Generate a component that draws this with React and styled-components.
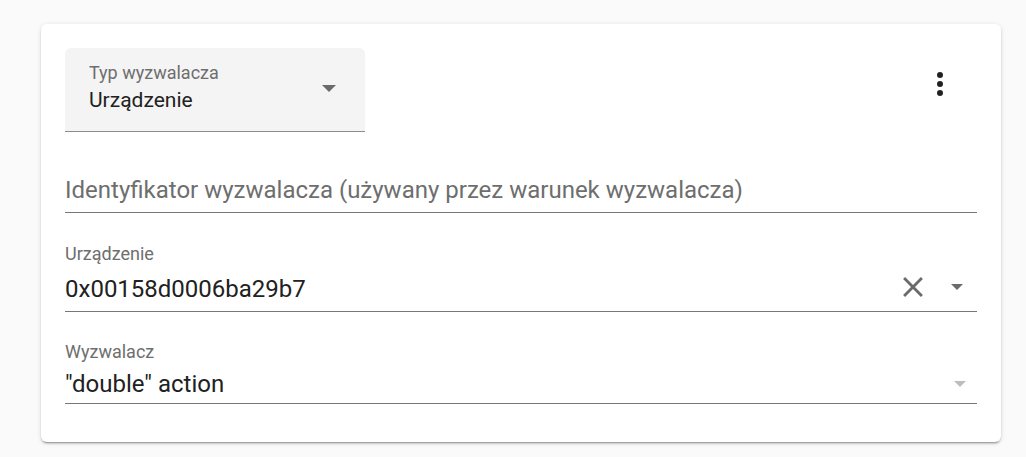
import React from "react";
import styled, { createGlobalStyle } from "styled-components";

const Global = createGlobalStyle`
  html, body { margin: 0; padding: 0; background: #fafafa; }
  body { font-family: Roboto, "Noto Sans", Arial, sans-serif; }
`;

const Page = styled.div`
  padding: 24px 0 0 41px;
  min-height: 457px;
  box-sizing: border-box;
  background: #fafafa;
`;

const Card = styled.div`
  width: 960px;
  background: #fff;
  border-radius: 6px;
  box-shadow: 0 2px 2px 0 rgba(0,0,0,.14), 0 1px 5px 0 rgba(0,0,0,.12), 0 3px 1px -2px rgba(0,0,0,.2);
  padding: 24px 24px 38px 24px;
  box-sizing: border-box;
`;

const Header = styled.div`
  display: flex;
  justify-content: space-between;
  align-items: flex-start;
`;

const Select = styled.div`
  position: relative;
  width: 300px;
  height: 84px;
  box-sizing: border-box;
  background: #f4f4f4;
  border-radius: 6px 6px 0 0;
  border-bottom: 1px solid #8c8c8c;
  padding: 13px 0 0 24px;
  display: flex;
  flex-direction: column;
`;

const SelectLabel = styled.div`
  font-size: 18px;
  line-height: 24px;
  color: #6e6e6e;
`;

const SelectValue = styled.div`
  font-size: 21px;
  line-height: 28px;
  margin-top: 1px;
  color: #212121;
`;

const SelectArrow = styled.span`
  position: absolute;
  right: 29px;
  top: 37px;
  width: 0;
  height: 0;
  border-left: 7.5px solid transparent;
  border-right: 7.5px solid transparent;
  border-top: 7.5px solid #6b6b6b;
`;

const IconButton = styled.button`
  width: 72px;
  height: 72px;
  border: none;
  background: none;
  padding: 0;
  margin: 0 1px 0 0;
  display: flex;
  align-items: center;
  justify-content: center;
  color: ${(p) => p.$color || "#212121"};
`;

const Field = styled.div`
  display: flex;
  align-items: center;
  margin-top: ${(p) => p.$top}px;
  padding-bottom: ${(p) => p.$bottom}px;
  border-bottom: 1px solid #777;
`;

const FieldBody = styled.div`
  flex: 1;
  display: flex;
  flex-direction: column;
`;

const FieldLabel = styled.div`
  font-size: 18px;
  line-height: 24px;
  color: #6e6e6e;
`;

const FieldValue = styled.div`
  font-size: 24px;
  line-height: 32px;
  margin-top: ${(p) => p.$gap || 0}px;
  color: ${(p) => (p.$placeholder ? "#6e6e6e" : "#212121")};
`;

const Trailing = styled.div`
  display: flex;
  align-items: center;
  align-self: flex-end;
  margin-bottom: ${(p) => p.$mb || 0}px;
`;

const Tri = styled.span`
  display: block;
  width: 0;
  height: 0;
  border-left: 6.5px solid transparent;
  border-right: 6.5px solid transparent;
  border-top: 6.5px solid ${(p) => p.$color};
  margin: 0 ${(p) => p.$mr}px 0 ${(p) => p.$ml}px;
`;

const DotsIcon = () => (
  <svg width="36" height="36" viewBox="0 0 24 24" fill="currentColor">
    <path d="M12,16A2,2 0 0,1 14,18A2,2 0 0,1 12,20A2,2 0 0,1 10,18A2,2 0 0,1 12,16M12,10A2,2 0 0,1 14,12A2,2 0 0,1 12,14A2,2 0 0,1 10,12A2,2 0 0,1 12,10M12,4A2,2 0 0,1 14,6A2,2 0 0,1 12,8A2,2 0 0,1 10,6A2,2 0 0,1 12,4Z" />
  </svg>
);

const CloseIcon = () => (
  <svg width="34" height="34" viewBox="0 0 24 24" fill="#6b6b6b" style={{ display: "block" }}>
    <path d="M19,6.41L17.59,5L12,10.59L6.41,5L5,6.41L10.59,12L5,17.59L6.41,19L12,13.41L17.59,19L19,17.59L13.41,12L19,6.41Z" />
  </svg>
);

export default function App() {
  return (
    <>
      <Global />
      <Page>
        <Card>
          <Header>
            <Select>
              <SelectLabel>Typ wyzwalacza</SelectLabel>
              <SelectValue>Urządzenie</SelectValue>
              <SelectArrow />
            </Select>
            <IconButton aria-label="menu">
              <DotsIcon />
            </IconButton>
          </Header>
          <Field $top={42} $bottom={6}>
            <FieldBody>
              <FieldValue $placeholder>
                Identyfikator wyzwalacza (używany przez warunek wyzwalacza)
              </FieldValue>
            </FieldBody>
          </Field>
          <Field $top={29} $bottom={6}>
            <FieldBody>
              <FieldLabel>Urządzenie</FieldLabel>
              <FieldValue $gap={7}>0x00158d0006ba29b7</FieldValue>
            </FieldBody>
            <Trailing $mb={1}>
              <CloseIcon />
              <Tri $color="#6b6b6b" $ml={21} $mr={14} />
            </Trailing>
          </Field>
          <Field $top={28} $bottom={3}>
            <FieldBody>
              <FieldLabel>Wyzwalacz</FieldLabel>
              <FieldValue $gap={4}>"double" action</FieldValue>
            </FieldBody>
            <Trailing $mb={13}>
              <Tri $color="#bdbdbd" $ml={0} $mr={11} />
            </Trailing>
          </Field>
        </Card>
      </Page>
    </>
  );
}
